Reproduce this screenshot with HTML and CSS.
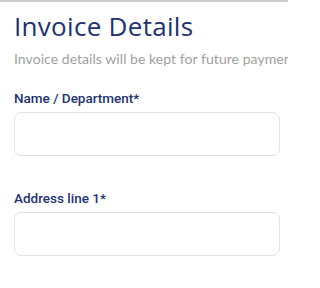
FILE: index.html
```html
<!DOCTYPE html>
<html>
<head>
<meta charset="utf-8">
<link rel="stylesheet" href="styles.css">
</head>
<body>
<div class="page">
  <h1 class="title">Invoice Details</h1>
  <p class="subtitle">Invoice details will be kept for future payments</p>
  <div class="field">
    <label class="label">Name / Department*</label>
    <div class="input"></div>
  </div>
  <div class="field field-next">
    <label class="label">Address line 1*</label>
    <div class="input"></div>
  </div>
</div>
</body>
</html>
```
FILE: styles.css
```css
html, body {
  margin: 0;
  padding: 0;
  background: #ffffff;
}
body {
  width: 288px;
  height: 286px;
  border-top: 2px solid #cccccc;
  font-family: "Lato", "Noto Sans", sans-serif;
  overflow: hidden;
}
.page {
  width: 266px;
  padding: 8px 0 0 14px;
  display: flex;
  flex-direction: column;
}
.title {
  margin: 0;
  font-family: "Open Sans", "Lato", sans-serif;
  font-size: 26px;
  font-weight: 400;
  letter-spacing: 0.3px;
  color: #1e3170;
  line-height: 32px;
  white-space: nowrap;
}
.subtitle {
  margin: 8px 0 0 0;
  font-size: 14px;
  color: #a0a0a0;
  line-height: 18px;
  white-space: nowrap;
  letter-spacing: 0.05px;
}
.field {
  display: flex;
  flex-direction: column;
  margin-top: 21px;
}
.field-next {
  margin-top: 33px;
}
.label {
  font-family: "Roboto", "Lato", sans-serif;
  font-size: 13.5px;
  font-weight: 500;
  color: #22336f;
  line-height: 18px;
}
.input {
  box-sizing: border-box;
  margin-top: 5px;
  height: 44px;
  border: 1px solid #e3e3e3;
  border-radius: 7px;
  background: #fff;
}
```
